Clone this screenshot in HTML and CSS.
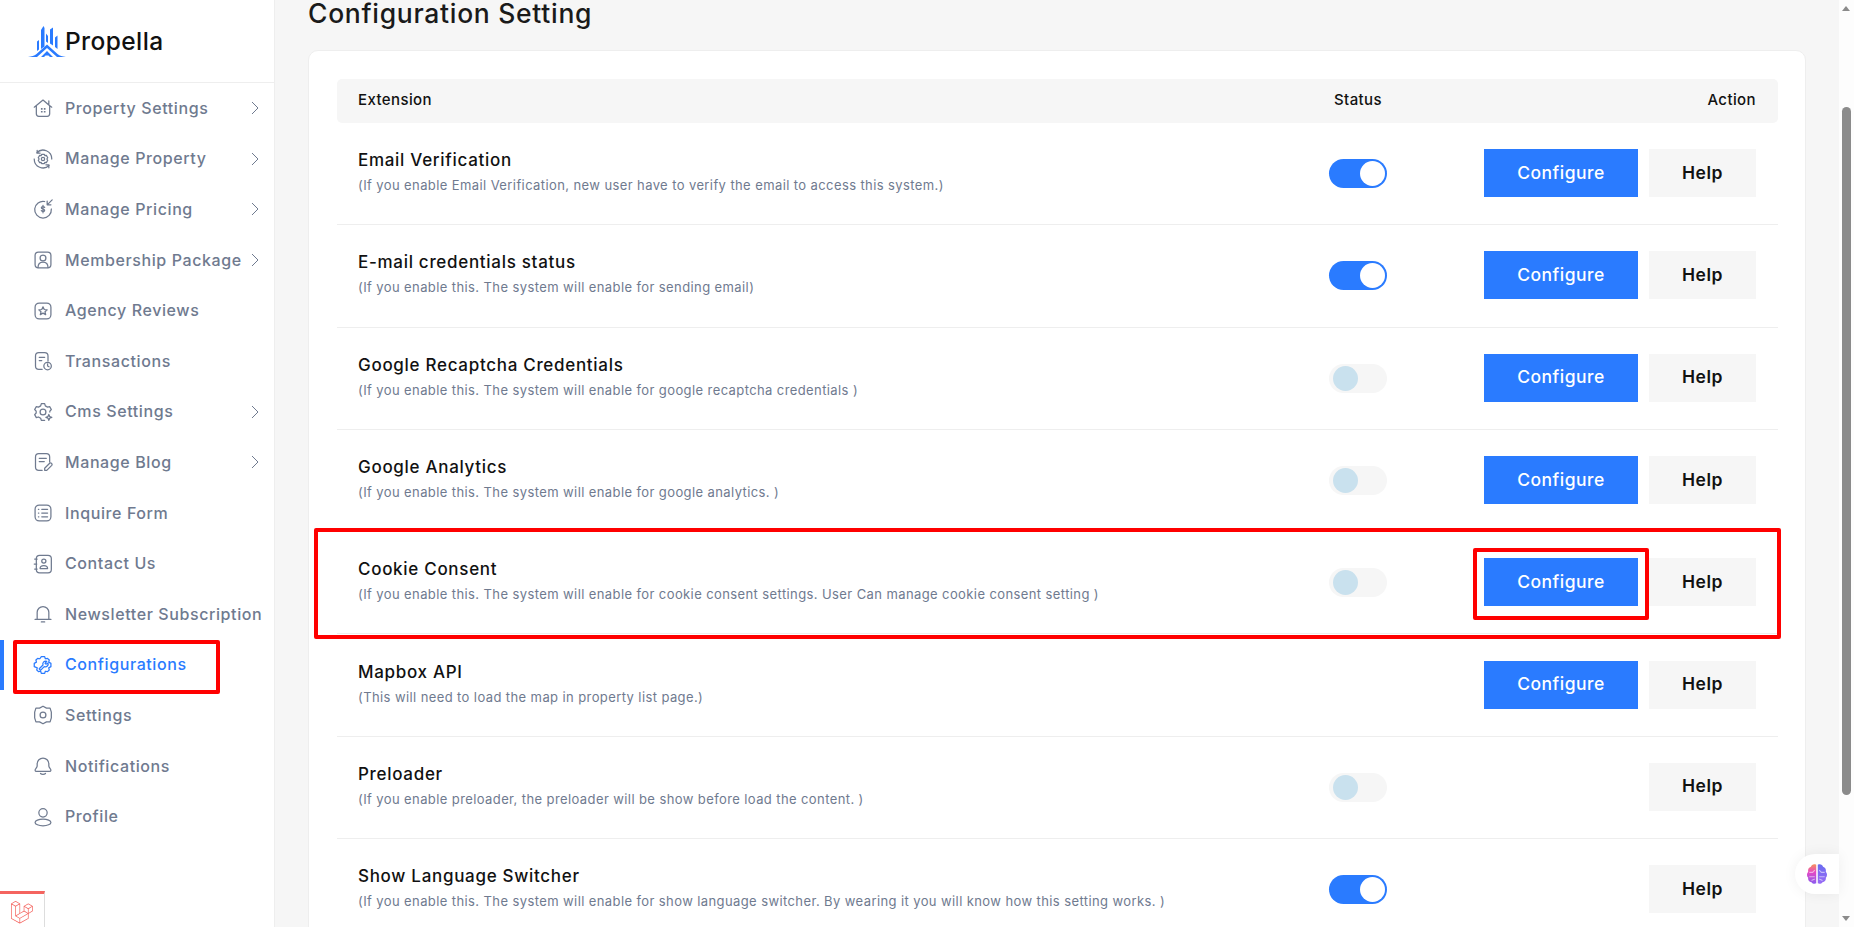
FILE: index.html
```html
<!DOCTYPE html>
<html lang="en">
<head>
<meta charset="utf-8">
<title>Configuration Setting</title>
<link rel="stylesheet" href="styles.css">
</head>
<body>
<div class="app">
  <aside class="sidebar">
    <div class="brand">
      <svg class="brand-mark" viewBox="0 0 38 31" fill="#2a7bff">
        <path d="M9 15.500 L11 14 V23.500 L9 25 Z"/><path d="M13 4 L15.500 0 L16.500 2 V20.500 L13 23 Z"/><path d="M18 7.500 L20 10 V17 L18 15.500 Z"/><path d="M22 3.500 L25 1.500 V19.500 L22 17.500 Z"/><path d="M27 11.500 L29.500 9.500 V23 L27 21 Z"/>
        <path d="M0 31 C4 30.500 6 30 8.500 28 L19 18.500 L29.500 28 C32 30 34 30.500 38 31 H29 L19 22 L9 31 Z"/>
        <path d="M13 31 L19 25 L25 31 H22 L19 28 L16 31 Z"/><path d="M17.500 27 H20.500 V29.500 H17.500 Z"/>
      </svg>
      <span class="brand-name">Propella</span>
    </div>
    <nav class="nav">
      <a class="nav-item"><svg class="ico" viewBox="0 0 24 24"><path d="M1.500 11 12 2.500l7 6V3.500M22.500 11 19 8.500M4 9.500V19a3 3 0 0 0 3 3h10a3 3 0 0 0 3-3V9.500"/><path class="thick" d="M9.500 12h2v2h-2zM13 12h2v2h-2zM9.500 15.500h2v2h-2zM13 15.500h2v2h-2z"/></svg><span class="nav-label">Property Settings</span><svg class="chev" viewBox="0 0 8 14"><path d="M1 1l6 6-6 6"/></svg></a>
      <a class="nav-item"><svg class="ico" viewBox="0 0 24 24"><path d="M4.500 4.500A10.500 10.500 0 0 1 22.500 12M19.500 19.500A10.500 10.500 0 0 1 1.500 12M5 1.500v3.500h3.500M19 22.500V19h-3.500"/><path d="M10.300 6.500h3.400l.6 1.500 1.700-.3 1.700 2.800-1.100 1.500 1.100 1.500-1.700 2.800-1.700-.3-.6 1.500h-3.400l-.6-1.500-1.700.3-1.700-2.800 1.100-1.500-1.100-1.500 1.700-2.800 1.700.3z"/><circle cx="12" cy="12" r="2"/></svg><span class="nav-label">Manage Property</span><svg class="chev" viewBox="0 0 8 14"><path d="M1 1l6 6-6 6"/></svg></a>
      <a class="nav-item"><svg class="ico" viewBox="0 0 24 24"><path d="M14 3A10 10 0 1 0 22 12"/><path d="M23 1l-6 6M17 2.500V7h4.500"/><path d="M14 10.200c-.4-.8-1.100-1.200-2-1.200-1.200 0-2 .6-2 1.500s.8 1.300 2 1.500 2 .7 2 1.600-.8 1.500-2 1.500c-.9 0-1.600-.4-2-1.200M12 7.500v9"/></svg><span class="nav-label">Manage Pricing</span><svg class="chev" viewBox="0 0 8 14"><path d="M1 1l6 6-6 6"/></svg></a>
      <a class="nav-item"><svg class="ico" viewBox="0 0 24 24"><rect x="2.500" y="2.500" width="19" height="19" rx="4"/><circle cx="12" cy="9.500" r="3.500"/><path d="M6 21c0-4 2.500-6.500 6-6.500s6 2.500 6 6.500"/></svg><span class="nav-label">Membership Package</span><svg class="chev" viewBox="0 0 8 14"><path d="M1 1l6 6-6 6"/></svg></a>
      <a class="nav-item"><svg class="ico" viewBox="0 0 24 24"><rect x="2.500" y="2.500" width="19" height="19" rx="5"/><path d="M12 7l1.500 3.200 3.500.4-2.600 2.300.8 3.500-3.200-1.800-3.200 1.800.8-3.500L7 10.600l3.500-.4z"/></svg><span class="nav-label">Agency Reviews</span></a>
      <a class="nav-item"><svg class="ico" viewBox="0 0 24 24"><path d="M11 22H7a4 4 0 0 1-4-4V6a4 4 0 0 1 4-4h7a4 4 0 0 1 4 4v6M7.500 7.500h6.500M7.500 11.500h3"/><circle cx="17.500" cy="18" r="4.500"/><path d="M17.500 15.500V18l1.700 1"/></svg><span class="nav-label">Transactions</span></a>
      <a class="nav-item"><svg class="ico" viewBox="0 0 24 24"><path d="M14 22h-4l-.8-2.500-2.700-1.500-2.500.7-2-3.500 1.800-2V11l-1.800-2 2-3.500 2.500.7L9.200 4.700 10 2h4l.8 2.700 2.700 1.500 2.500-.7 2 3.500-1.800 2v1"/><circle cx="12" cy="12" r="3.500"/><path d="M19 15l1 2.500 2.500 1-2.500 1-1 2.500-1-2.500-2.500-1 2.500-1z"/></svg><span class="nav-label">Cms Settings</span><svg class="chev" viewBox="0 0 8 14"><path d="M1 1l6 6-6 6"/></svg></a>
      <a class="nav-item"><svg class="ico" viewBox="0 0 24 24"><path d="M11 22H7a4 4 0 0 1-4-4V6a4 4 0 0 1 4-4h9a4 4 0 0 1 4 4v6M7.500 7.500h8.500M7.500 11.500h6"/><path d="M14 22v-2.500l6-6a1.800 1.800 0 0 1 2.500 2.500l-6 6z"/></svg><span class="nav-label">Manage Blog</span><svg class="chev" viewBox="0 0 8 14"><path d="M1 1l6 6-6 6"/></svg></a>
      <a class="nav-item"><svg class="ico" viewBox="0 0 24 24"><rect x="2.500" y="2.500" width="19" height="19" rx="5"/><path d="M10.500 7.500h7M10.500 12h7M10.500 16.500h7M6.500 7.500h.5M6.500 12h.5M6.500 16.500h.5"/></svg><span class="nav-label">Inquire Form</span></a>
      <a class="nav-item"><svg class="ico" viewBox="0 0 24 24"><rect x="4" y="1.500" width="18" height="21" rx="4"/><path d="M2 6h3M1.500 12h3M2 18h3"/><circle cx="13" cy="8.500" r="2.500"/><path d="M8.500 17.500c0-2.500 1.500-3.500 4.500-3.500s4.500 1 4.500 3.500z"/></svg><span class="nav-label">Contact Us</span></a>
      <a class="nav-item"><svg class="ico" viewBox="0 0 24 24"><path d="M5 18V10a7 7 0 0 1 14 0v8M2.500 18.500h19M10 21.500h4"/></svg><span class="nav-label">Newsletter Subscription</span></a>
      <a class="nav-item nav-item-active"><svg class="ico" viewBox="0 0 24 24"><path d="M10 2h4l.8 2.500 2.600-.5 2.100 2-.6 2.600 2.600 1.400v4l-2.600 1.400.6 2.600-2.100 2-2.600-.5L14 22h-4l-.8-2.500-2.600.5-2.100-2 .6-2.600L1.500 14v-4l2.600-1.400-.6-2.600 2.100-2 2.600.5z"/><path d="M7.500 16.500l4.500-4.500a3.500 3.500 0 0 1 4.500-4.500L14.500 10l1 1 2.500-1.500a3.500 3.500 0 0 1-4.500 4.500L9 18.500z"/></svg><span class="nav-label">Configurations</span></a>
      <a class="nav-item"><svg class="ico" viewBox="0 0 24 24"><path d="M12 1.500l4.200 2.300 4.300 0 1.500 4.700v7l-1.500 4.700-4.300 0-4.200 2.300-4.200-2.300-4.300 0L2 15.500v-7L3.500 3.800l4.300 0z"/><circle cx="12" cy="12" r="3.500"/></svg><span class="nav-label">Settings</span></a>
      <a class="nav-item"><svg class="ico" viewBox="0 0 24 24"><path d="M5 12V9.500a7 7 0 0 1 14 0V12c0 2 2.500 3.500 2.500 5 0 1-.8 1.500-2 1.500h-15c-1.200 0-2-.5-2-1.500 0-1.500 2.500-3 2.500-5z"/><path d="M9 21c1.500 1.500 4.500 1.500 6 0"/></svg><span class="nav-label">Notifications</span></a>
      <a class="nav-item"><svg class="ico" viewBox="0 0 24 24"><circle cx="12" cy="7" r="5"/><ellipse cx="12" cy="18.500" rx="9.500" ry="4"/></svg><span class="nav-label">Profile</span></a>
    </nav>
  </aside>

  <main class="main">
    <h1 class="page-title">Configuration Setting</h1>
    <section class="card">
      <div class="row row-head">
        <span>Extension</span>
        <span class="head-status">Status</span>
        <span class="head-action">Action</span>
      </div>

      <div class="row">
        <div class="ext"><h2 class="ext-name">Email Verification</h2><p class="ext-note">(If you enable Email Verification, new user have to verify the email to access this system.)</p></div>
        <span class="toggle toggle-on"></span>
        <div class="actions"><a class="btn btn-primary">Configure</a><a class="btn btn-light">Help</a></div>
      </div>
      <div class="row">
        <div class="ext"><h2 class="ext-name">E-mail credentials status</h2><p class="ext-note">(If you enable this. The system will enable for sending email)</p></div>
        <span class="toggle toggle-on"></span>
        <div class="actions"><a class="btn btn-primary">Configure</a><a class="btn btn-light">Help</a></div>
      </div>
      <div class="row">
        <div class="ext"><h2 class="ext-name">Google Recaptcha Credentials</h2><p class="ext-note">(If you enable this. The system will enable for google recaptcha credentials )</p></div>
        <span class="toggle"></span>
        <div class="actions"><a class="btn btn-primary">Configure</a><a class="btn btn-light">Help</a></div>
      </div>
      <div class="row">
        <div class="ext"><h2 class="ext-name">Google Analytics</h2><p class="ext-note">(If you enable this. The system will enable for google analytics. )</p></div>
        <span class="toggle"></span>
        <div class="actions"><a class="btn btn-primary">Configure</a><a class="btn btn-light">Help</a></div>
      </div>
      <div class="row">
        <div class="ext"><h2 class="ext-name">Cookie Consent</h2><p class="ext-note">(If you enable this. The system will enable for cookie consent settings. User Can manage cookie consent setting )</p></div>
        <span class="toggle"></span>
        <div class="actions"><a class="btn btn-primary">Configure</a><a class="btn btn-light">Help</a></div>
      </div>
      <div class="row">
        <div class="ext"><h2 class="ext-name">Mapbox API</h2><p class="ext-note">(This will need to load the map in property list page.)</p></div>
        <span></span>
        <div class="actions"><a class="btn btn-primary">Configure</a><a class="btn btn-light">Help</a></div>
      </div>
      <div class="row">
        <div class="ext"><h2 class="ext-name">Preloader</h2><p class="ext-note">(If you enable preloader, the preloader will be show before load the content. )</p></div>
        <span class="toggle"></span>
        <div class="actions"><a class="btn btn-light">Help</a></div>
      </div>
      <div class="row">
        <div class="ext"><h2 class="ext-name">Show Language Switcher</h2><p class="ext-note">(If you enable this. The system will enable for show language switcher. By wearing it you will know how this setting works. )</p></div>
        <span class="toggle toggle-on"></span>
        <div class="actions"><a class="btn btn-light">Help</a></div>
      </div>
    </section>
    <div class="ai-bubble">
      <svg class="brain" viewBox="0 0 20 20">
        <defs><linearGradient id="brainL" x1="0" y1="0" x2="0" y2="1"><stop offset="0" stop-color="#f7925a"/><stop offset=".4" stop-color="#e648c4"/><stop offset="1" stop-color="#8a5cf0"/></linearGradient><linearGradient id="brainR" x1="0" y1="0" x2="0" y2="1"><stop offset="0" stop-color="#6a6cf0"/><stop offset="1" stop-color="#9a6cf5"/></linearGradient></defs>
        <path fill="url(#brainL)" d="M9.300 1.500C7 .5 5 1.500 4.500 3.500 2.500 4 1.500 6 2 8 .5 9.500.5 12 2 13.500c-.5 2 1 4 3 4 1 1.500 3 1.800 4.300 1z"/>
        <path fill="url(#brainR)" d="M10.700 1.500C13 .5 15 1.500 15.500 3.500c2 .5 3 2.500 2.500 4.500 1.500 1.500 1.500 4 0 5.500.5 2-1 4-3 4-1 1.500-3 1.800-4.300 1z"/>
        <path fill="none" stroke="#fff" stroke-opacity=".55" d="M3 8.500h3l2-2M3 12.500h5M5 16l3-1.500M17 8.500h-3l-2-2M17 12.500h-5M15 16l-3-1.500"/>
      </svg>
    </div>
  </main>

  <div class="scrollbar">
    <span class="arrow arrow-up"></span>
    <div class="track"><div class="thumb"></div></div>
    <span class="arrow arrow-down"></span>
  </div>

  <div class="debugbar">
    <svg class="laravel" viewBox="0 0 50 52"><path d="M49.626 11.564a.809.809 0 0 1 .028.209v10.972a.8.8 0 0 1-.402.694l-9.209 5.302V39.25c0 .286-.152.55-.4.694L20.42 51.01c-.044.025-.092.041-.14.058-.018.006-.035.017-.054.022a.805.805 0 0 1-.41 0c-.022-.006-.042-.018-.063-.026-.044-.016-.09-.03-.132-.054L.402 39.944A.801.801 0 0 1 0 39.25V6.334c0-.072.01-.142.028-.21.006-.023.02-.044.028-.067.015-.042.029-.085.051-.124.015-.026.037-.047.055-.071.023-.032.044-.065.071-.093.023-.023.053-.04.079-.06.029-.024.055-.05.088-.069h.001l9.61-5.533a.802.802 0 0 1 .8 0l9.61 5.533h.002c.032.02.059.045.088.068.026.02.055.038.078.06.028.029.048.062.072.094.017.024.04.045.054.071.023.04.036.082.052.124.008.023.022.044.028.068a.809.809 0 0 1 .028.209v20.559l8.008-4.611v-10.51c0-.07.01-.141.028-.208.007-.024.02-.045.028-.068.016-.042.03-.085.052-.124.015-.026.037-.047.054-.071.024-.032.044-.065.072-.093.023-.023.052-.04.078-.06.03-.024.056-.05.088-.069h.001l9.611-5.533a.801.801 0 0 1 .8 0l9.61 5.533c.034.02.06.045.09.068.025.02.054.038.077.06.028.029.048.062.072.094.018.024.04.045.054.071.023.039.036.082.052.124.009.023.022.044.028.068zm-1.574 10.718v-9.124l-3.363 1.936-4.646 2.675v9.124l8.01-4.611zm-9.61 16.505v-9.13l-4.57 2.61-13.05 7.448v9.216l17.62-10.144zM1.602 7.719v31.068L19.22 48.93v-9.214l-9.204-5.209-.003-.002-.004-.002c-.031-.018-.057-.044-.086-.066-.025-.02-.054-.036-.076-.058l-.002-.003c-.026-.025-.044-.056-.066-.084-.02-.027-.044-.05-.06-.078l-.001-.003c-.018-.03-.029-.066-.042-.1-.013-.03-.03-.058-.038-.09v-.001c-.01-.038-.012-.078-.016-.117-.004-.03-.012-.06-.012-.09v-.002-21.481L4.965 9.654 1.602 7.72zm8.81-5.994L2.405 6.334l8.005 4.609 8.006-4.61-8.006-4.608zm4.164 28.764l4.645-2.674V7.719l-3.363 1.936-4.646 2.675v20.096l3.364-1.937zM39.243 7.164l-8.006 4.609 8.006 4.609 8.005-4.61-8.005-4.608zm-.801 10.605l-4.646-2.675-3.363-1.936v9.124l4.645 2.674 3.364 1.937v-9.124zM20.02 38.33l11.743-6.704 5.87-3.35-8-4.606-9.211 5.303-8.395 4.833 7.993 4.524z"/></svg>
  </div>

  <div class="mark mark-nav"></div>
  <div class="mark mark-row"></div>
  <div class="mark mark-btn"></div>
</div>
</body>
</html>
```

FILE: styles.css
```css
* { box-sizing: border-box; }

html, body {
  margin: 0;
  height: 100%;
  overflow: hidden;
}

body {
  font-family: Inter, "Open Sans", "Liberation Sans", sans-serif;
  color: #111;
  background: #f6f6f6;
}

.app {
  position: relative;
  display: flex;
  height: 927px;
  overflow: hidden;
}

/* Sidebar */
.sidebar {
  flex: 0 0 275px;
  background: #fff;
  border-right: 1px solid #eeeeee;
}

.brand {
  display: flex;
  align-items: center;
  height: 83px;
  padding-left: 28px;
  border-bottom: 1px solid #eeeeee;
}

.brand-mark {
  width: 38px;
  height: 31px;
  flex: none;
}

.brand-name {
  margin-left: -1px;
  font-size: 24.5px;
  font-weight: 500;
  letter-spacing: 0.4px;
  color: #111;
}

.nav {
  display: flex;
  flex-direction: column;
}

.nav-item {
  position: relative;
  display: flex;
  align-items: center;
  height: 50.6px;
  padding-left: 33px;
  color: #6f7a8f;
}

.nav-label {
  margin: 0 0 1px 12px;
  font-size: 16px;
  font-weight: 500;
  letter-spacing: 0.6px;
  white-space: nowrap;
}

.ico {
  flex: none;
  width: 20px;
  height: 20px;
  fill: none;
  stroke: currentColor;
  stroke-width: 1.5;
  stroke-linecap: round;
  stroke-linejoin: round;
}

.ico .thick {
  fill: currentColor;
  stroke: none;
}

.chev {
  position: absolute;
  left: 251px;
  top: 18px;
  width: 8px;
  height: 14px;
  fill: none;
  stroke: #6f7a8f;
  stroke-width: 1;
}

.nav-item-active {
  color: #2a7bff;
}

.nav-item-active::before {
  content: "";
  position: absolute;
  left: 0;
  top: 0;
  bottom: 0;
  width: 4px;
  background: #2a7bff;
}

/* Main */
.main {
  position: relative;
  flex: 1;
  min-width: 0;
  padding: 0 33px;
}

.page-title {
  margin: 0;
  height: 50px;
  font-size: 26.5px;
  line-height: 26px;
  font-weight: 500;
  letter-spacing: 0.7px;
  color: #1a1a1a;
}

.card {
  padding: 28px 27px 0 28px;
  background: #fff;
  border: 1px solid #eeeeee;
  border-radius: 10px;
}

.row {
  display: grid;
  grid-template-columns: 1fr 58px 369px;
  align-items: center;
  height: 102.3px;
  padding: 0 22px 0 21px;
  border-bottom: 1px solid #eeeeee;
}

.row-head {
  height: 44px;
  padding-bottom: 3px;
  border-bottom: 0;
  border-radius: 5px;
  background: #f6f6f6;
  font-size: 15px;
  font-weight: 500;
  letter-spacing: 0.4px;
  color: #111;
}

.head-status {
  justify-self: center;
  white-space: nowrap;
}

.head-action {
  text-align: right;
}

.ext {
  padding-bottom: 5px;
}

.ext-name {
  margin: 0 0 4px;
  font-size: 17px;
  line-height: 24px;
  font-weight: 500;
  letter-spacing: 0.7px;
  color: #111;
}

.ext-note {
  margin: 0;
  font-size: 13px;
  line-height: 18px;
  letter-spacing: 0.4px;
  color: #6f7a8f;
}

/* Toggle */
.toggle {
  position: relative;
  display: block;
  width: 58px;
  height: 29px;
  border-radius: 15px;
  background: #f6f6f6;
}

.toggle::after {
  content: "";
  position: absolute;
  left: 4px;
  top: 2px;
  width: 25px;
  height: 25px;
  border-radius: 50%;
  background: #c9e1ee;
}

.toggle-on {
  background: #2a7bff;
}

.toggle-on::after {
  left: 31px;
  background: #fff;
}

/* Buttons */
.actions {
  display: flex;
  justify-content: flex-end;
  gap: 11px;
  margin-bottom: 1px;
}

.btn {
  display: flex;
  align-items: center;
  justify-content: center;
  height: 48px;
  padding-bottom: 2px;
  font-size: 17.5px;
  font-weight: 600;
  letter-spacing: 0.5px;
}

.btn-primary {
  width: 154px;
  background: #2a7bff;
  color: #fff;
  font-weight: 500;
}

.btn-light {
  width: 107px;
  background: #f6f6f6;
  color: #111;
}

/* Floating helper */
.ai-bubble {
  position: absolute;
  right: 0;
  top: 854px;
  display: flex;
  align-items: center;
  justify-content: center;
  width: 44px;
  height: 40px;
  border-radius: 20px 0 0 20px;
  background: #fff;
  box-shadow: 0 0 14px rgba(0, 0, 0, 0.06);
}

.brain {
  width: 22px;
  height: 22px;
}

/* Scrollbar */
.scrollbar {
  flex: 0 0 15px;
  display: flex;
  flex-direction: column;
  background: #fdfdfd;
}

.track {
  flex: 1;
  padding: 90px 3px 115px;
}

.thumb {
  height: 100%;
  border-radius: 5px;
  background: #8b8b8b;
}

.arrow {
  flex: none;
  display: block;
  width: 15px;
  height: 17px;
  position: relative;
}

.arrow::after {
  content: "";
  position: absolute;
  left: 3px;
  border-left: 4.5px solid transparent;
  border-right: 4.5px solid transparent;
}

.arrow-up::after {
  top: 6px;
  border-bottom: 5px solid #8b8b8b;
}

.arrow-down::after {
  top: 6px;
  border-top: 5px solid #8b8b8b;
}

/* Debug bar tab */
.debugbar {
  position: absolute;
  left: 0;
  bottom: 0;
  display: flex;
  align-items: center;
  justify-content: center;
  width: 45px;
  height: 36px;
  padding-top: 3px;
  background: #fff;
  border-top: 3px solid #f4645f;
  border-right: 1px solid #dddddd;
}

.laravel {
  width: 22px;
  height: 23px;
  fill: #f4645f;
}

/* Red annotation boxes */
.mark {
  position: absolute;
  border: 4px solid #ff0000;
  border-radius: 2px;
}

.mark-nav {
  left: 13px;
  top: 640px;
  width: 207px;
  height: 54px;
}

.mark-row {
  left: 314px;
  top: 528px;
  width: 1467px;
  height: 111px;
}

.mark-btn {
  left: 1473px;
  top: 548px;
  width: 176px;
  height: 72px;
}
```
